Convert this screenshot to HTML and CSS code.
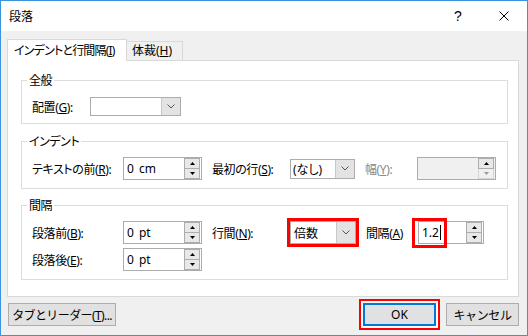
FILE: index.html
```html
<!DOCTYPE html>
<html lang="ja">
<head>
    <meta charset="UTF-8" />
    <title>段落</title>
    <link rel="stylesheet" href="styles.css">
</head>
<body>

<div class="window">
    <div class="titlebar">
        <span class="title">段落</span>
        <span class="tb-btn help">?</span>
        <span class="tb-btn">
            <svg width="10" height="10" viewBox="0 0 10 10"><path d="M0.5 0.5 L9.5 9.5 M9.5 0.5 L0.5 9.5" stroke="#000" stroke-width="1" fill="none"/></svg>
        </span>
    </div>

    <div class="body">
        <div class="tabs">
            <div class="tab active">インデントと行間隔(<u>I</u>)</div>
            <div class="tab">体裁(<u>H</u>)</div>
        </div>

        <div class="panel">
            <fieldset class="group g-general">
                <legend>全般</legend>
                <div class="row row-short">
                    <span class="lbl w-align">配置(<u>G</u>):</span>
                    <div class="combo c-align">
                        <span class="combo-text"></span>
                        <span class="combo-btn"><svg width="8" height="5" viewBox="0 0 8 5"><path d="M0.5 0.5 L4 4 L7.5 0.5" fill="none" stroke="#555"/></svg></span>
                    </div>
                </div>
            </fieldset>

            <fieldset class="group g-indent">
                <legend>インデント</legend>
                <div class="row">
                    <span class="lbl w-first">テキストの前(<u>R</u>):</span>
                    <div class="spin s-wide">
                        <span class="spin-text">0 cm</span>
                        <span class="spin-btns">
                            <span class="sb"><svg width="5" height="3" viewBox="0 0 5 3"><path d="M0 3 L2.5 0 L5 3Z"/></svg></span>
                            <span class="sb"><svg width="5" height="3" viewBox="0 0 5 3"><path d="M0 0 L2.5 3 L5 0Z"/></svg></span>
                        </span>
                    </div>
                    <span class="lbl w-mid">最初の行(<u>S</u>):</span>
                    <div class="combo c-small">
                        <span class="combo-text">(なし)</span>
                        <span class="combo-btn"><svg width="8" height="5" viewBox="0 0 8 5"><path d="M0.5 0.5 L4 4 L7.5 0.5" fill="none" stroke="#555"/></svg></span>
                    </div>
                    <span class="lbl w-last disabled">幅(<u>Y</u>):</span>
                    <div class="spin s-wide spin-disabled">
                        <span class="spin-text"></span>
                        <span class="spin-btns">
                            <span class="sb"><svg width="5" height="3" viewBox="0 0 5 3"><path d="M0 3 L2.5 0 L5 3Z"/></svg></span>
                            <span class="sb sb-off"><svg width="5" height="3" viewBox="0 0 5 3"><path d="M0 0 L2.5 3 L5 0Z" fill="#9a9a9a"/></svg></span>
                        </span>
                    </div>
                </div>
            </fieldset>

            <fieldset class="group g-spacing">
                <legend>間隔</legend>
                <div class="row">
                    <span class="lbl w-first">段落前(<u>B</u>):</span>
                    <div class="spin s-wide">
                        <span class="spin-text">0 pt</span>
                        <span class="spin-btns">
                            <span class="sb"><svg width="5" height="3" viewBox="0 0 5 3"><path d="M0 3 L2.5 0 L5 3Z"/></svg></span>
                            <span class="sb"><svg width="5" height="3" viewBox="0 0 5 3"><path d="M0 0 L2.5 3 L5 0Z"/></svg></span>
                        </span>
                    </div>
                    <span class="lbl w-mid">行間(<u>N</u>):</span>
                    <div class="combo c-line marked">
                        <span class="combo-text">倍数</span>
                        <span class="combo-btn"><svg width="8" height="5" viewBox="0 0 8 5"><path d="M0.5 0.5 L4 4 L7.5 0.5" fill="none" stroke="#555"/></svg></span>
                    </div>
                    <span class="lbl w-last">間隔(<u>A</u>)</span>
                    <div class="spin s-narrow">
                        <span class="spin-text">1.2<span class="caret"></span></span>
                        <span class="spin-btns">
                            <span class="sb"><svg width="5" height="3" viewBox="0 0 5 3"><path d="M0 3 L2.5 0 L5 3Z"/></svg></span>
                            <span class="sb"><svg width="5" height="3" viewBox="0 0 5 3"><path d="M0 0 L2.5 3 L5 0Z"/></svg></span>
                        </span>
                        <span class="mark-box"></span>
                    </div>
                </div>
                <div class="row">
                    <span class="lbl w-first">段落後(<u>E</u>):</span>
                    <div class="spin s-wide">
                        <span class="spin-text">0 pt</span>
                        <span class="spin-btns">
                            <span class="sb"><svg width="5" height="3" viewBox="0 0 5 3"><path d="M0 3 L2.5 0 L5 3Z"/></svg></span>
                            <span class="sb"><svg width="5" height="3" viewBox="0 0 5 3"><path d="M0 0 L2.5 3 L5 0Z"/></svg></span>
                        </span>
                    </div>
                </div>
            </fieldset>
        </div>

        <div class="footer">
            <button class="btn btn-tabs">タブとリーダー(<u>T</u>)...</button>
            <span class="spacer"></span>
            <button class="btn btn-ok">OK</button>
            <button class="btn btn-cancel">キャンセル</button>
        </div>
    </div>
</div>

</body>
</html>
```

FILE: styles.css
```css
body {
  margin: 0;
  font-family: "Noto Sans", "Noto Sans CJK JP", sans-serif;
  font-size: 12px;
  color: #000;
  font-feature-settings: "palt";
}

.window {
  width: 528px;
  height: 336px;
  box-sizing: border-box;
  border: 1px solid #3b93dc;
  background-color: #f0f0f0;
}

.titlebar {
  height: 30px;
  background-color: #fff;
  display: flex;
  align-items: center;
}

.title {
  flex: 1;
  padding-left: 8px;
}

.tb-btn {
  width: 46px;
  height: 30px;
  display: flex;
  align-items: center;
  justify-content: center;
}

.help {
  font-family: "Liberation Sans", sans-serif;
  font-size: 14px;
}

.body {
  padding: 8px 8px 0 6px;
}

/* tabs */
.tabs {
  display: flex;
  align-items: flex-start;
  height: 22px;
}

.tab {
  box-sizing: border-box;
  border: 1px solid #d9d9d9;
  border-bottom: none;
  white-space: nowrap;
}

.tab.active {
  width: 120px;
  height: 22px;
  padding: 1px 0 0 6px;
  line-height: 20px;
  letter-spacing: -0.8px;
  background-color: #fff;
  position: relative;
  z-index: 1;
}

.tab:not(.active) {
  width: 56px;
  height: 19px;
  margin-top: 2px;
  border-left: none;
  padding-left: 5px;
  line-height: 18px;
}

.panel {
  margin-top: -1px;
  height: 237px;
  box-sizing: border-box;
  background-color: #fff;
  border: 1px solid #d9d9d9;
  padding: 12px 10px 0 13px;
}

/* group boxes */
.group {
  margin: 0;
  min-width: 0;
  border: 1px solid #dcdcdc;
  padding: 8px 0 8px 10px;
}

.group legend {
  line-height: 15px;
  padding: 0 2px;
  margin-left: -5px;
  letter-spacing: -0.4px;
}

.g-general {
  padding-top: 9px;
  padding-bottom: 7px;
}

.g-indent {
  margin-top: 10px;
}

.g-spacing {
  margin-top: 9px;
}

.row {
  display: flex;
  align-items: center;
  height: 23px;
}

.row-short {
  height: 19px;
}

.row + .row {
  margin-top: 4px;
}

.lbl {
  white-space: nowrap;
  flex: none;
  letter-spacing: -0.4px;
}

.w-align { width: 58px; }
.w-first { width: 91px; }
.w-mid { width: 78px; margin-left: 10px; }
.w-last { width: 52px; margin-left: 10px; }

.disabled {
  color: #8a8a8a;
}

/* combo boxes */
.combo {
  display: flex;
  box-sizing: border-box;
  border: 1px solid #acacac;
  background-color: #fff;
  flex: none;
}

.c-align { width: 91px; height: 19px; }
.c-small { width: 65px; height: 20px; }
.c-line { width: 66px; height: 23px; }

.combo-text {
  flex: 1;
  padding-left: 2px;
  display: flex;
  align-items: center;
  white-space: nowrap;
}

.c-line .combo-text {
  padding-left: 3px;
}

.combo-btn {
  width: 18px;
  background-color: #e3e3e3;
  border-left: 1px solid #c8c8c8;
  display: flex;
  align-items: center;
  justify-content: center;
}

.marked {
  outline: 3px solid #f00;
}

/* spin boxes */
.spin {
  display: flex;
  box-sizing: border-box;
  height: 23px;
  border: 1px solid #acacac;
  background-color: #fff;
  padding: 0 1px 0 3px;
  flex: none;
  position: relative;
}

.s-wide { width: 79px; }
.s-narrow { width: 66px; }

.spin-disabled {
  background-color: #f0f0f0;
}

.spin-text {
  flex: 1;
  display: flex;
  align-items: center;
  white-space: nowrap;
  word-spacing: 2px;
}

.caret {
  display: inline-block;
  width: 1px;
  height: 15px;
  background-color: #000;
  margin-left: 1px;
}

.spin-btns {
  width: 16px;
  display: flex;
  flex-direction: column;
}

.sb {
  flex: 1;
  box-sizing: border-box;
  border: 1px solid #adadad;
  background-color: #e8e8e8;
  display: flex;
  align-items: center;
  justify-content: center;
}

.sb + .sb {
  border-top: none;
}

.sb-off {
  border-color: #d6d6d6;
  background-color: #f0f0f0;
}

.mark-box {
  position: absolute;
  left: -7px;
  top: -4px;
  width: 35px;
  height: 30px;
  box-sizing: border-box;
  border: 3px solid #f00;
}

/* bottom buttons */
.footer {
  display: flex;
  margin-top: 6px;
  padding-left: 1px;
}

.btn {
  height: 23px;
  box-sizing: border-box;
  border: 1px solid #adadad;
  background-color: #e1e1e1;
  font-family: inherit;
  font-size: 12px;
  color: #000;
  padding: 0;
  white-space: nowrap;
}

.btn-tabs {
  width: 108px;
  letter-spacing: -0.6px;
}

.spacer { flex: 1; }

.btn-ok {
  width: 73px;
  border: 2px solid #0078d7;
  box-shadow: 0 0 0 2px #fff, 0 0 0 4px #f00;
}

.btn-cancel {
  width: 73px;
  margin-left: 10px;
  letter-spacing: -0.4px;
}
```
